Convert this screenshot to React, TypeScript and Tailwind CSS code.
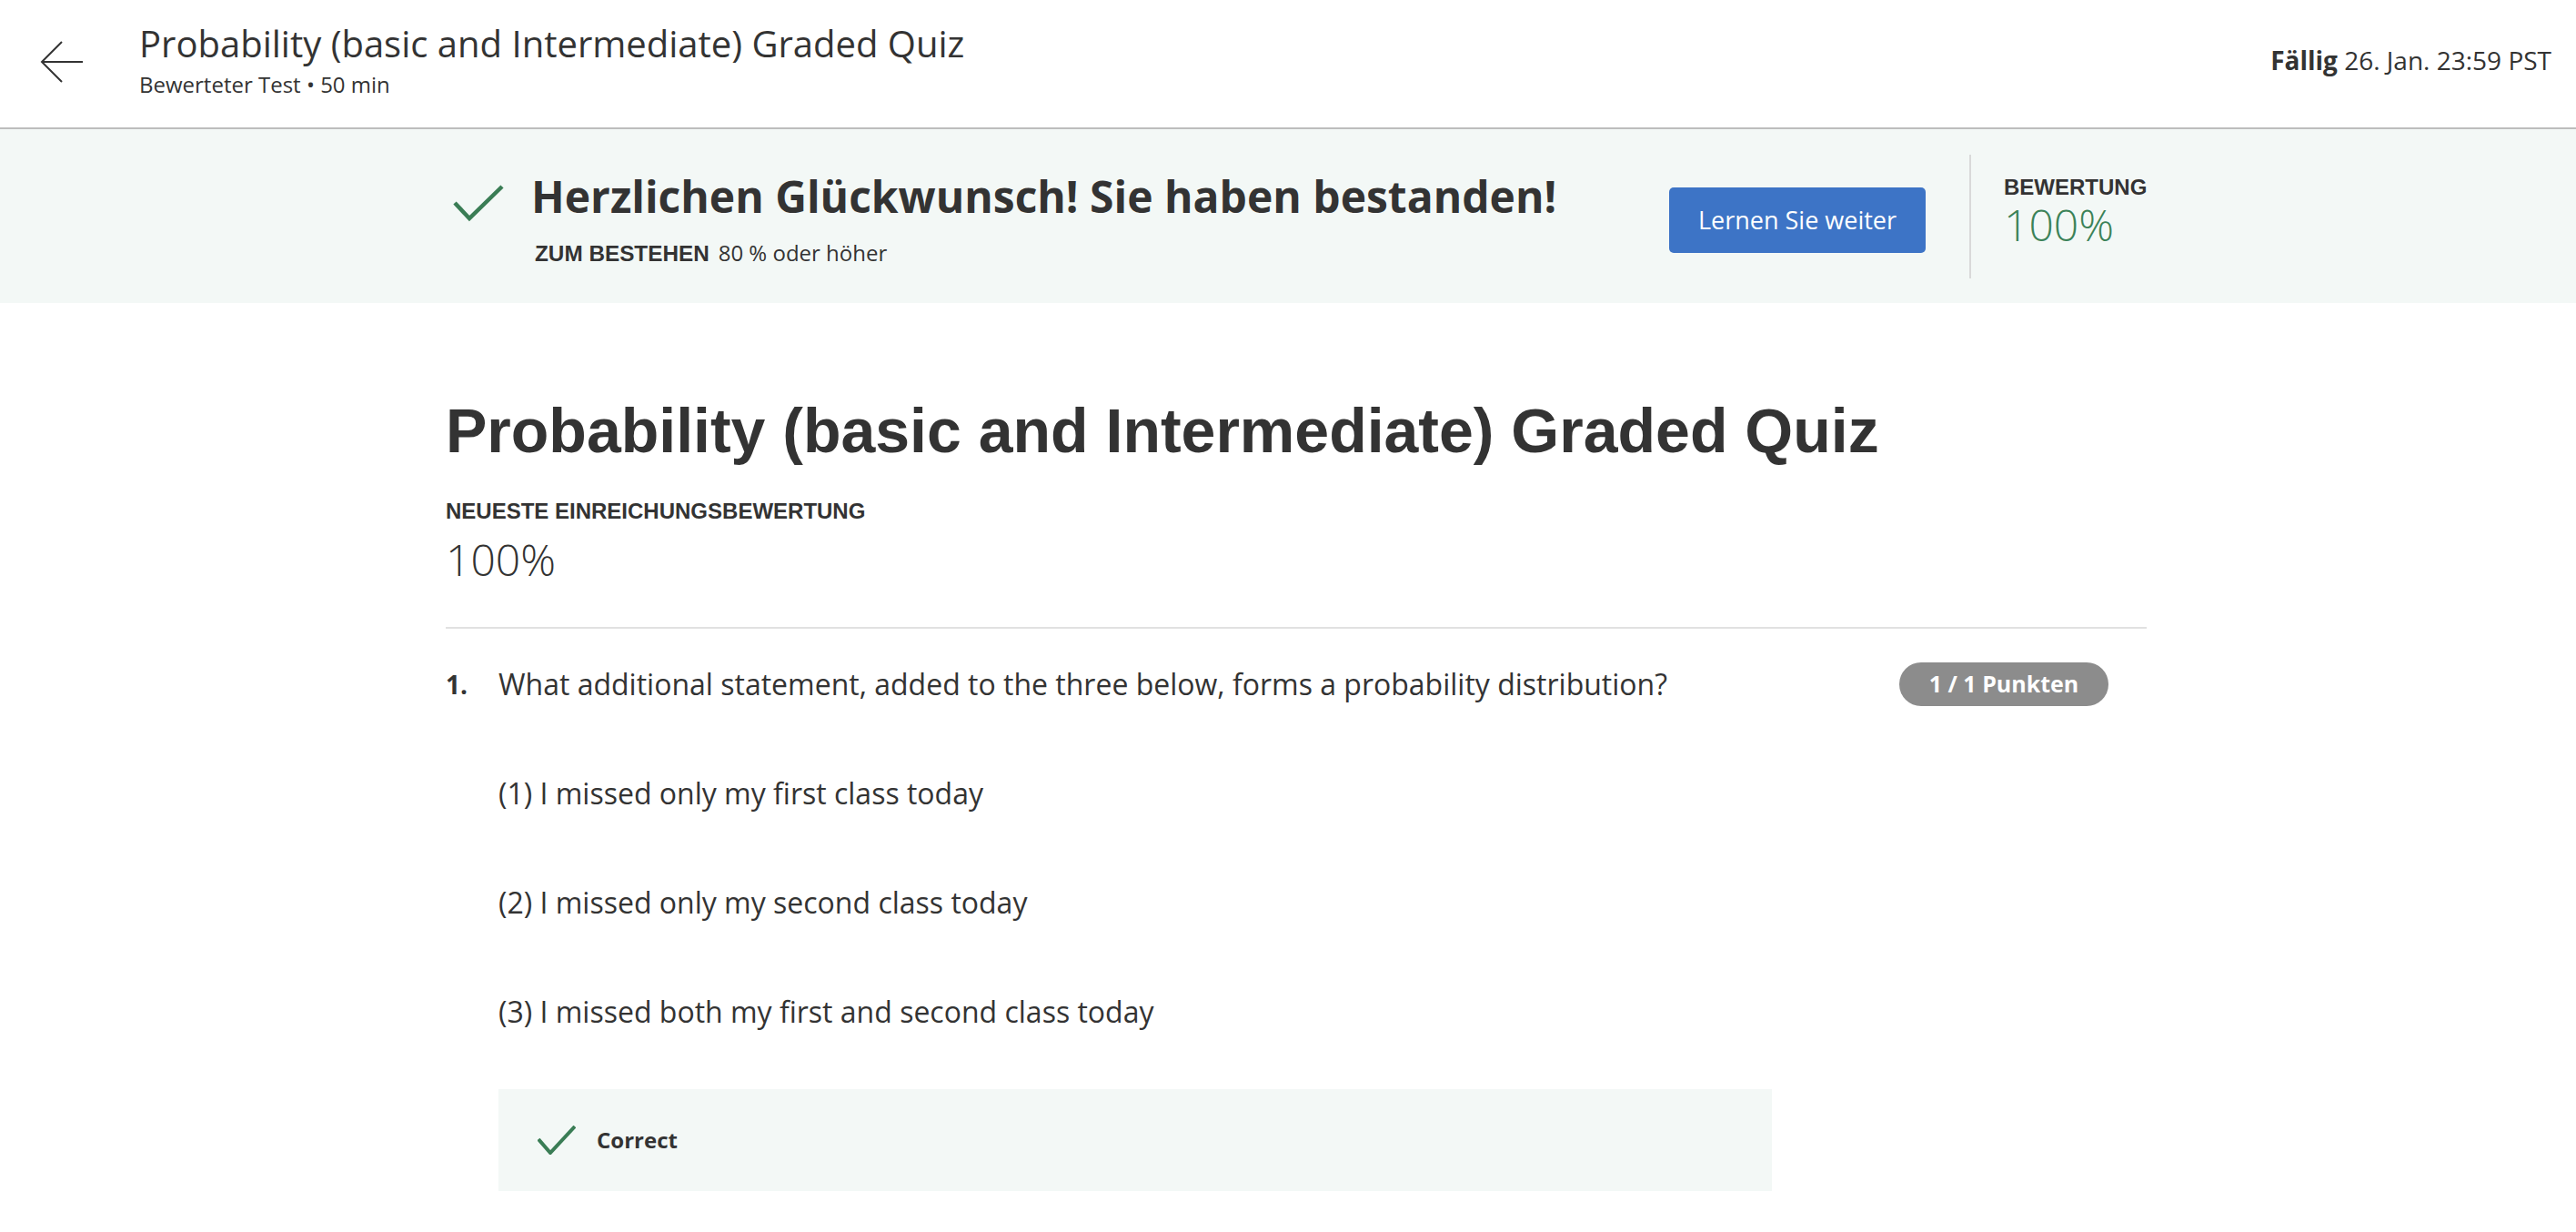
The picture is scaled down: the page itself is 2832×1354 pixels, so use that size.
import React from "react";

const sans = "font-['Open_Sans',sans-serif]";
const arial = "font-['Liberation_Sans',Arial,sans-serif]";

function BackArrow() {
    return (
        <svg width="48" height="46" viewBox="0 0 48 46" fill="none" stroke="#333" strokeWidth="2">
            <path d="M47 23H3" />
            <path d="M24 1L2 23L24 45" />
        </svg>
    );
}

function Check({ w, h, points, sw }: { w: number; h: number; points: string; sw: number }) {
    return (
        <svg width={w} height={h} viewBox={`0 0 ${w} ${h}`} fill="none" stroke="#3a7d55" strokeWidth={sw}>
            <polyline points={points} />
        </svg>
    );
}

const options = [
    "(1) I missed only my first class today",
    "(2) I missed only my second class today",
    "(3) I missed both my first and second class today",
];

export default function App() {
    return (
        <div className={`h-[1354px] w-[2832px] overflow-hidden bg-white text-[#333] ${sans}`}>
            {/* top bar */}
            <header className="flex h-[142px] border-b-2 border-[#bdbdbd]">
                <div className="ml-[44px] mt-[45px]">
                    <BackArrow />
                </div>
                <div className="ml-[61px] mt-[24px] flex-1">
                    <h2 className="text-[40px] leading-[48px]">
                        Probability (basic and Intermediate) Graded Quiz
                    </h2>
                    <p className="mt-[7px] text-[24px] leading-[28px]">Bewerteter Test • 50 min</p>
                </div>
                <div className="mr-[27px] mt-[48px] text-[28px] leading-[36px]">
                    <span className="font-bold">Fällig</span> 26. Jan. 23:59 PST
                </div>
            </header>

            {/* passed banner */}
            <section className="h-[191px] bg-[#f3f8f6]">
                <div className="ml-[490px] flex w-[1870px]">
                    <div className="ml-[8px] mt-[60px]">
                        <Check w={56} h={42} points="2,21 18,38 54,3" sw={4.5} />
                    </div>
                    <div className="ml-[30px] mt-[46px] flex-1">
                        <h3 className="text-[48px] font-bold leading-[56px]">
                            Herzlichen Glückwunsch! Sie haben bestanden!
                        </h3>
                        <p className="ml-[4px] mt-[20px] flex items-baseline text-[24px] leading-[28px]">
                            <span className={`${arial} text-[24.3px] font-bold`}>ZUM BESTEHEN</span>
                            <span className="ml-[10px]">80 % oder höher</span>
                        </p>
                    </div>
                    <button className="mt-[64px] h-[72px] w-[282px] rounded-[5px] bg-[#3d74c6] text-[27px] text-white">
                        Lernen Sie weiter
                    </button>
                    <div className="ml-[48px] mt-[28px] h-[136px] w-[2px] bg-[#d9d9d9]" />
                    <div className="ml-[36px] mt-[50px] w-[157px]">
                        <div className={`${arial} text-[24px] font-bold leading-[28px]`}>BEWERTUNG</div>
                        <div className="mt-[3px] text-[48px] font-light leading-[48px] text-[#3b8258]">100%</div>
                    </div>
                </div>
            </section>

            {/* submission */}
            <main className="ml-[490px] w-[1870px]">
                <h1 className={`${arial} mt-[106px] text-[68px] font-bold leading-[68px]`}>
                    Probability (basic and Intermediate) Graded Quiz
                </h1>
                <div className={`${arial} mt-[43px] text-[24px] font-bold leading-[24px]`}>
                    NEUESTE EINREICHUNGSBEWERTUNG
                </div>
                <div className="mt-[17px] text-[48px] font-light leading-[48px]">100%</div>
                <div className="mt-[50px] h-[2px] bg-[#e1e1e1]" />

                <div className="mt-[37px] flex h-[48px] items-start">
                    <div className="w-[58px] text-[28px] font-bold leading-[48px]">1.</div>
                    <p className="flex-1 text-[32px] leading-[48px]">
                        What additional statement, added to the three below, forms a probability distribution?
                    </p>
                    <span className="mr-[42px] flex h-[48px] w-[230px] items-center justify-center rounded-full bg-[#8c8c8c] text-[25px] font-bold text-white">
                        1 / 1 Punkten
                    </span>
                </div>

                <div className="ml-[58px] mt-[80px] flex flex-col gap-[88px]">
                    {options.map((o) => (
                        <p key={o} className="text-[32px] leading-[32px]">
                            {o}
                        </p>
                    ))}
                </div>

                <div className="ml-[58px] mt-[69px] flex h-[112px] w-[1400px] items-center bg-[#f3f8f6] pl-[43px]">
                    <Check w={42} h={32} points="1,15 14,30 41,1" sw={4} />
                    <span className="ml-[23px] text-[24px] font-bold">Correct</span>
                </div>
            </main>
        </div>
    );
}
